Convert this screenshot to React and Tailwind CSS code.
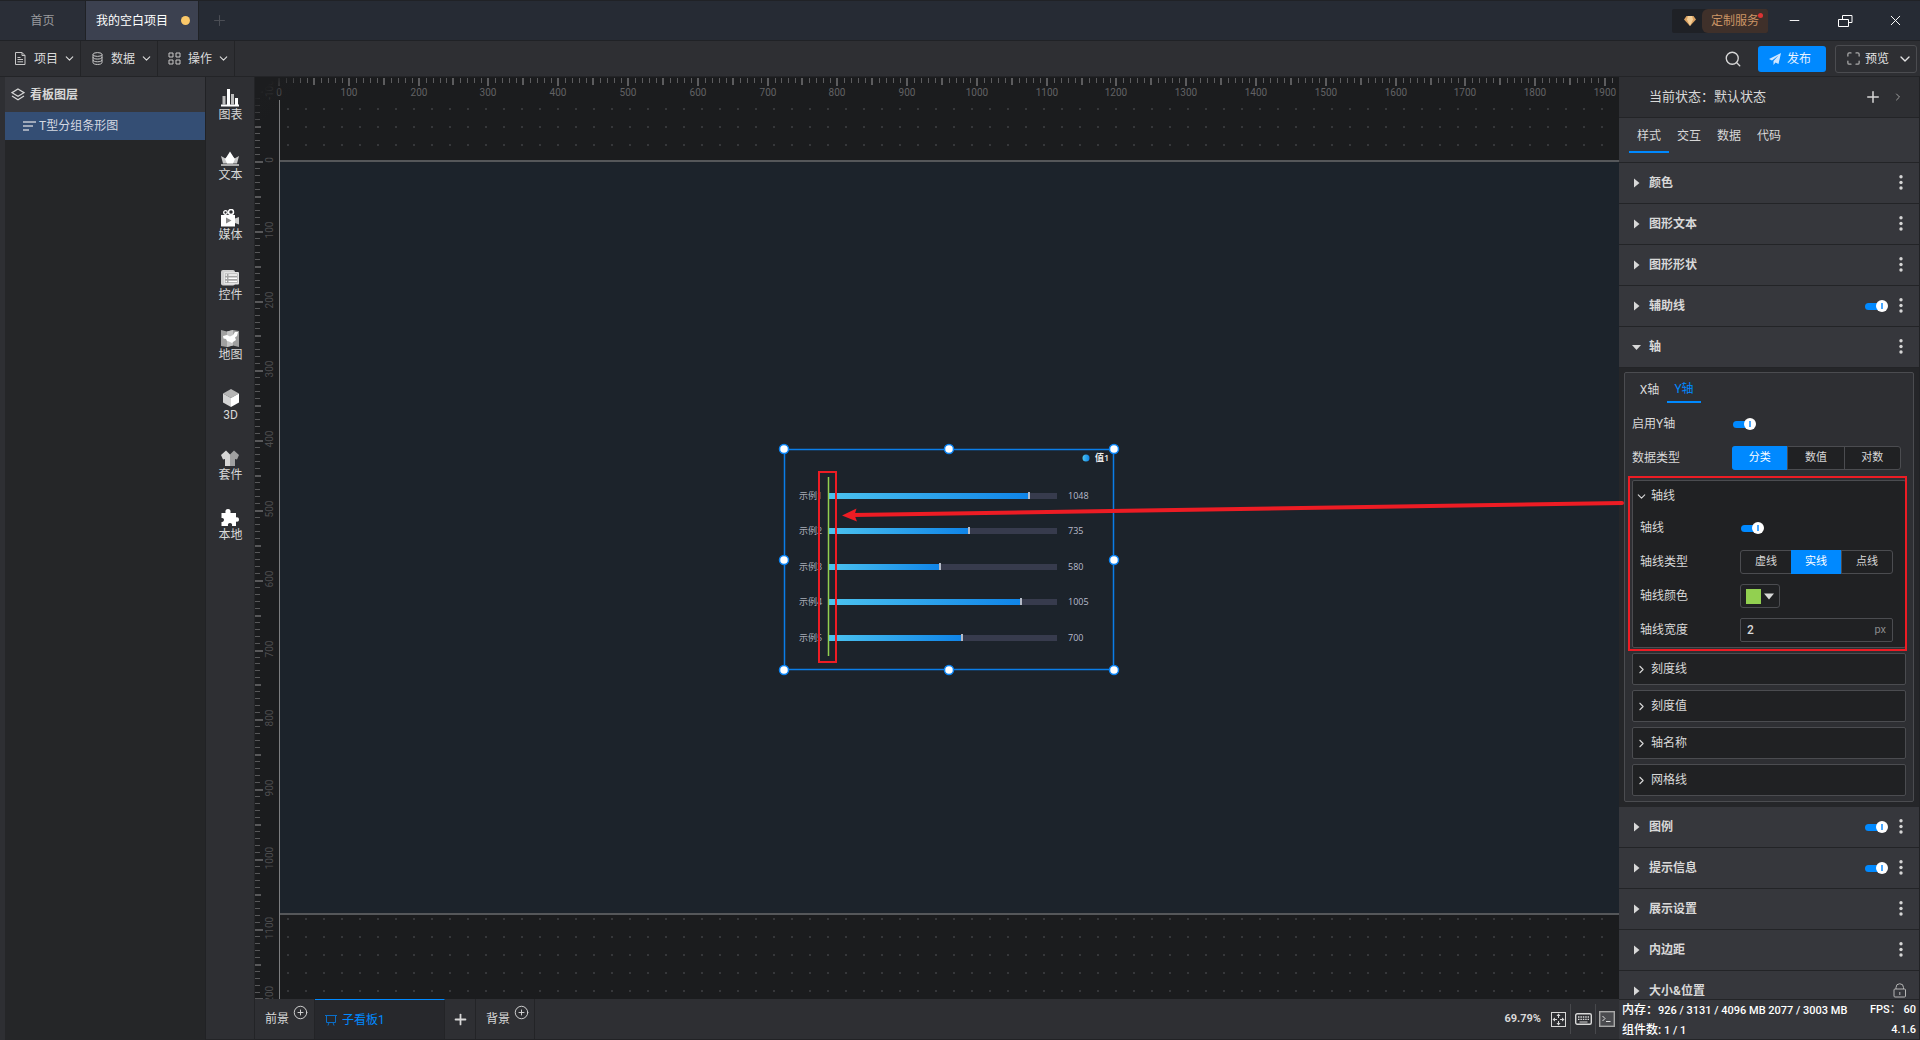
import React from 'react';
import {
  Plus, Minus, X, Search, ChevronDown, ChevronRight, Maximize, CirclePlus,
} from 'lucide-react';

const SCALE = 0.6979;

/* ---------- small controls ---------- */

function Toggle({ label }) {
  return (
    <label className="relative flex h-3 w-[23px] items-center cursor-pointer">
      <input type="checkbox" defaultChecked aria-label={label} className="sr-only" />
      <span className="h-[7px] w-5 rounded-full bg-[#0089ff]" />
      <span className="absolute right-0 flex size-3 items-center justify-center rounded-full bg-white">
        <span className="h-1.5 w-0.5 bg-[#4aa8ff]" />
      </span>
    </label>
  );
}

function Segmented({ name, options, value, className }) {
  return (
    <div role="radiogroup" aria-label={name} className={`flex h-6 rounded-[3px] border border-[#4b4c50] bg-[#202123] ${className}`}>
      {options.map((o, i) => (
        <label
          key={o}
          className={
            'flex flex-1 items-center justify-center text-[11px] ' +
            (o === value ? '-my-px bg-[#0089ff] text-white ' : '') +
            (i > 0 && o !== value ? 'border-l border-[#4b4c50] ' : '') +
            (i === 0 && o === value ? '-ml-px rounded-l-[3px]' : '')
          }
        >
          <input type="radio" name={name} defaultChecked={o === value} className="sr-only" />
          {o}
        </label>
      ))}
    </div>
  );
}

function Dots() {
  return (
    <svg width="4" height="16" viewBox="0 0 4 16" fill="#d6d6d6">
      <circle cx="2" cy="1.700" r="1.700" />
      <circle cx="2" cy="7.500" r="1.700" />
      <circle cx="2" cy="13" r="1.700" />
    </svg>
  );
}

function Section({ title, toggle, open, lock }) {
  return (
    <div className="flex h-[41px] shrink-0 items-center border-b border-[#232427] bg-[#36373c] pl-[15px] pr-4">
      <button type="button" className="flex flex-1 items-center gap-[9px] text-left text-xs font-bold text-[#d8d8d8]">
        <svg width="6" height="10" viewBox="0 0 6 10" fill="#d8d8d8" className="overflow-visible">
          {open ? <path d="M-2 3h9L2.500 8z" /> : <path d="M0 0.500v9L5.500 5z" />}
        </svg>
        {title}
      </button>
      <div className="flex items-center gap-[11px]">
        {toggle && <Toggle label={title} />}
        {lock ? (
          <svg width="14" height="16" viewBox="0 0 14 16" fill="none" stroke="#b5b5b5" className="-mr-1">
            <rect x="1" y="6" width="11.500" height="8" rx="1" />
            <path d="M3 6V4.500a3.700 3.700 0 0 1 7.500 0V6M6.800 9v3" />
          </svg>
        ) : (
          <button type="button" aria-label={`${title}更多`}><Dots /></button>
        )}
      </div>
    </div>
  );
}

function Collapsed({ title }) {
  return (
    <button type="button" className="flex h-8 w-full items-center gap-[3px] rounded-[2px] border border-[#4b4c50] bg-[#202123] pl-[2px] text-left">
      <ChevronRight size={13} strokeWidth={2} />
      {title}
    </button>
  );
}

/* ---------- menu icons ---------- */

function FileIcon() {
  return (
    <svg width="13" height="13" viewBox="0 0 13 13" fill="none" stroke="#c8c8c8">
      <path d="M1.500 0.500h6.500l3 3v9h-9.500zM8 0.500v3h3M3.500 5.500h3M3.500 7.500h5.500M3.500 9.800h5.500" />
    </svg>
  );
}

function DataIcon() {
  return (
    <svg width="13" height="13" viewBox="0 0 13 13" fill="none" stroke="#c8c8c8">
      <ellipse cx="6.500" cy="2.500" rx="4.500" ry="1.900" />
      <path d="M2 2.500v8c0 2.600 9 2.600 9 0v-8M2 5.200c0 2.500 9 2.500 9 0M2 7.900c0 2.500 9 2.500 9 0" />
    </svg>
  );
}

function GridIcon() {
  return (
    <svg width="13" height="13" viewBox="0 0 13 13" fill="none" stroke="#c8c8c8">
      <path d="M1 1h4v4H1zM8 1h4v4H8zM1 8h4v4H1zM8 8h4v4H8z" />
    </svg>
  );
}

/* ---------- component library icons ---------- */

const tools = [
  {
    name: '图表',
    icon: (
      <g>
        <path fill="#bdbdbd" d="M1.500 7h3v8.500h-3zM10 5h3v10.500h-3z" />
        <path fill="#fff" d="M6 0h3v15.500H6zM14 9h3v6.500h-3zM0 15.500h18V17.500H0z" />
      </g>
    ),
  },
  {
    name: '文本',
    icon: (
      <g>
        <path fill="#c9c9c9" d="M0 7l4.500 2.500L9 6l4.500 3.500L18 7l-2 7.500H2z" />
        <path fill="#fff" d="M9 2.500l3.500 5.500 1.500 2-2 4.500H6L4 10l1.500-2z" />
        <path fill="#aaa" d="M0 15h18v2H0z" />
      </g>
    ),
  },
  {
    name: '媒体',
    icon: (
      <g>
        <circle cx="4.500" cy="3.500" r="1.800" fill="none" stroke="#fff" strokeWidth="1.300" />
        <circle cx="10" cy="3" r="2.500" fill="none" stroke="#fff" strokeWidth="1.500" />
        <path fill="#fff" d="M0 6h14v11.500H0z" />
        <path fill="#cfcfcf" d="M14 9.500l4-1.500v7.500l-4-1.500z" />
        <path fill="#8a8a8a" d="M5 8.500v6l5.500-3z" />
      </g>
    ),
  },
  {
    name: '控件',
    icon: (
      <g>
        <rect x="0" y="1" width="14" height="15.500" rx="2" fill="#d0d0d0" />
        <rect x="3" y="3" width="15" height="12.500" rx="1" fill="#e4e4e4" />
        <path fill="#a6a6a6" d="M4 4.500h12.500v9.500H4z" />
        <path stroke="#fff" strokeWidth="1.500" d="M4.500 6h1.500M7.500 6h8.500M4.500 9.200h1.500M7.500 9.200h8.500M4.500 12.400h1.500M7.500 12.400h8.500" />
      </g>
    ),
  },
  {
    name: '地图',
    icon: (
      <g>
        <path fill="#a0a0a0" d="M0 1l6 1.500L12 1l6 1v16l-6-1.500L6 18l-6-1z" />
        <path fill="#c4c4c4" d="M6 2.500L12 1v15.500L6 18z" />
        <path fill="#fff" d="M2 7l4-1 3 1.500 3-1.500 2-3 3 0-1 4-2 1.500 1 2.500-3 2-1 1-3-1.500-2-.500-1-2-2.500-.500z" />
      </g>
    ),
  },
  {
    name: '3D',
    icon: (
      <g>
        <path fill="#b5b5b5" d="M9 0l8 4.500L9 9 1 4.500z" />
        <path fill="#d5d5d5" d="M1 4.500L9 9v9l-8-4.500z" />
        <path fill="#fff" d="M17 4.500L9 9v9l8-4.500z" />
      </g>
    ),
  },
  {
    name: '套件',
    icon: (
      <g>
        <path fill="#d5d5d5" d="M5 1.500L0 6l2 4.500 2-.5v7h5V5.500z" />
        <path fill="#a0a0a0" d="M13 1.500L18 6l-2 4.500-2-.5v7H9V5.500z" />
      </g>
    ),
  },
  {
    name: '本地',
    icon: (
      <path
        fill="#fff"
        d="M0.500 4h4C4 1.500 5 0 7 0s3 1.500 2.500 4H15v4.500c1.500-.500 3 0 3 2s-1.500 2.500-3 2V17h-4c.500-2-.500-3-2-3s-2.500 1-2 3H0.500v-4c1.500 .500 2.500-1 2.500-2.200S2 8.500 0.500 9z"
      />
    ),
  },
];

/* ---------- stage ---------- */

const hTicks = Array.from({ length: 192 }, (_, i) => i * 10);
const vTicks = Array.from({ length: 131 }, (_, i) => i * 10 - 100);

function Rulers() {
  return (
    <svg className="absolute inset-0 size-full" fontFamily="Roboto, sans-serif" fontSize="10">
      <defs>
        <pattern id="grid" x="32" y="31" width="18" height="18" patternUnits="userSpaceOnUse">
          <rect width="2" height="2" fill="#36373a" />
        </pattern>
        <linearGradient id="fade" x1="0" y1="0" x2="1" y2="1">
          <stop offset="0.200" stopColor="#1c1d1f" />
          <stop offset="0.550" stopColor="#1c1d1f" stopOpacity="0" />
        </linearGradient>
      </defs>
      <rect x="25" y="24" width="100%" height="100%" fill="url(#grid)" />
      <rect x="25" y="84" width="100%" height="753" fill="#1c232b" />
      <path d="M25 84h3000M25 837h3000" stroke="#55575a" strokeWidth="2" />
      {hTicks.map((t) => {
        const x = Math.round(24 + t * SCALE);
        return t % 50 === 0 ? (
          <rect key={t} x={x - 1} y="1" width="2" height={t % 100 === 0 ? 8 : 7} fill="#5c5c5e" />
        ) : (
          <rect key={t} x={x} y="1" width="1" height="5" fill="#5c5c5e" />
        );
      })}
      {hTicks.filter((t) => t % 100 === 0).map((t) => (
        <text key={t} x={Math.round(24 + t * SCALE)} y="19" textAnchor="middle" fill="#626264">{t}</text>
      ))}
      {vTicks.map((t) => {
        const y = Math.round(84 + t * SCALE);
        if (t % 50 !== 0) return <rect key={t} x="0" y={y} width="5" height="1" fill="#58585a" />;
        return <rect key={t} x="0" y={y} width={t % 100 === 0 ? 8 : 6} height="2" fill="#58585a" />;
      })}
      {vTicks.filter((t) => t % 100 === 0).map((t) => {
        const y = Math.round(83 + t * SCALE);
        return (
          <text key={t} x="18" y={y} textAnchor="middle" fill="#4e4e50" transform={`rotate(-90 18 ${y})`}>{t}</text>
        );
      })}
      <rect width="50" height="50" fill="url(#fade)" />
      <rect x="24" y="23" width="1" height="100%" fill="#7c7d7f" />
    </svg>
  );
}

const bars = [
  { label: '示例1', value: 1048, y: 47, w: 201 },
  { label: '示例2', value: 735, y: 82, w: 141 },
  { label: '示例3', value: 580, y: 118, w: 112 },
  { label: '示例4', value: 1005, y: 153, w: 193 },
  { label: '示例5', value: 700, y: 189, w: 134 },
];

const handles = [[0, 0], [165, 0], [330, 0], [0, 111], [330, 111], [0, 221], [165, 221], [330, 221]];

function Chart() {
  return (
    <svg
      className="absolute left-[529px] top-[372px] overflow-visible"
      width="330"
      height="221"
      fontFamily="'Open Sans', 'Noto Sans CJK SC', sans-serif"
      fontSize="9"
    >
      <defs>
        <linearGradient id="bar">
          <stop offset="0" stopColor="#4cc3ef" />
          <stop offset="1" stopColor="#0f84e8" />
        </linearGradient>
      </defs>
      <circle cx="302" cy="9" r="3.500" fill="url(#bar)" />
      <text x="311" y="12" fill="#eee" fontWeight="600">值1</text>
      {bars.map((b) => (
        <g key={b.label}>
          <text x="15" y={b.y + 3} fill="#a9adb8">{b.label}</text>
          <rect x="44" y={b.y - 3} width="229" height="6" fill="#373b4d" />
          <rect x="44" y={b.y - 3} width={b.w} height="6" fill="url(#bar)" />
          <rect x={43 + b.w} y={b.y - 4} width="2" height="7" fill="#b4bac6" />
          <text x="284" y={b.y + 3} fill="#b9bccb">{b.value}</text>
        </g>
      ))}
      <path d="M44.500 28v179" stroke="#92d050" strokeWidth="1.500" />
      <rect x="0.500" y="0.500" width="329" height="220" fill="none" stroke="#0a7de8" strokeWidth="1.500" />
      {handles.map(([x, y]) => (
        <circle key={`${x}-${y}`} cx={x} cy={y} r="4.500" fill="#fff" stroke="#0a84f5" strokeWidth="1.500" />
      ))}
      <rect x="35" y="23" width="17" height="190" fill="none" stroke="#ed1c24" strokeWidth="2" />
    </svg>
  );
}

function Arrow() {
  return (
    <svg className="pointer-events-none absolute left-[586px] top-[420px] z-10 overflow-visible" width="784" height="30">
      <path d="M12 18L781 6" stroke="#ed1c24" strokeWidth="4" strokeLinecap="round" />
      <path d="M1 18.500L15.500 11.500l-2 6.500 2.500 6.500z" fill="#ed1c24" />
    </svg>
  );
}

/* ---------- page ---------- */

function TitleBar() {
  return (
    <header className="flex h-[41px] shrink-0 items-stretch border-y border-[#202226] bg-[#262b34]">
      <button type="button" className="w-[86px] border-r border-[#202226] bg-[#2a2e37] text-[#9a9b9e]">首页</button>
      <button type="button" className="flex w-[113px] items-center justify-between border-r border-[#202226] bg-[#3c4150] pl-2.5 pr-2 text-white">
        我的空白项目
        <span className="size-[9px] rounded-full bg-[#fbc869]" />
      </button>
      <button type="button" aria-label="新建" className="px-3 text-[#4b4e55]">
        <Plus size={17} strokeWidth={1.5} />
      </button>
      <div className="ml-auto flex items-center">
        <button type="button" className="relative flex h-6 w-24 items-center overflow-hidden rounded-[2px] bg-[#1f2126]">
          <svg width="12" height="10" viewBox="0 0 12 10" className="ml-3">
            <path d="M2.500 0h7L12 3.500 6 10 0 3.500z" fill="#dba262" />
            <path d="M4 0h4l1 3.500L6 10 3 3.500z" fill="#f4cf98" />
          </svg>
          <span className="ml-1.5 flex h-6 flex-1 items-center rounded-l-md bg-[#3f302a] pl-[9px] text-[#cc9566]">定制服务</span>
          <span className="absolute right-[5px] top-1 size-[5px] rounded-full bg-[#dd3333]" />
        </button>
        <button type="button" aria-label="最小化" className="flex w-[52px] justify-center text-white"><Minus size={15} strokeWidth={1.5} /></button>
        <button type="button" aria-label="还原" className="flex w-[50px] justify-center">
          <svg width="15" height="12" viewBox="0 0 15 12" fill="none" stroke="#fff">
            <path d="M0.500 4.500h10v7h-10zM4.500 4.500v-4h9.500v7h-3.500" />
          </svg>
        </button>
        <button type="button" aria-label="关闭" className="flex w-[50px] justify-center text-white"><X size={17} strokeWidth={1.4} /></button>
      </div>
    </header>
  );
}

function Toolbar() {
  const menus = [['项目', FileIcon], ['数据', DataIcon], ['操作', GridIcon]];
  return (
    <nav className="flex h-9 shrink-0 items-stretch border-b border-[#232427] bg-[#2e2f33]">
      <div className="flex pl-1">
        {menus.map(([name, Icon]) => (
          <button key={name} type="button" className="flex w-[77px] items-center border-r border-[#232427] pl-2.5 text-[#dcdcdc]">
            <Icon />
            <span className="ml-[7px] mr-[5px]">{name}</span>
            <ChevronDown size={13} strokeWidth={2} />
          </button>
        ))}
      </div>
      <div className="ml-auto flex items-center pr-[3px]">
        <button type="button" aria-label="搜索" className="mr-4 text-[#d8d8d8]"><Search size={18} strokeWidth={1.8} /></button>
        <button type="button" className="mr-[9px] flex h-[26px] w-[68px] items-center gap-1.5 rounded-[3px] bg-[#0089ff] pl-[11px] text-[#e8f2ff]">
          <svg width="12" height="12" viewBox="0 0 12 12" fill="#cfe6ff">
            <path d="M12 0L0 6l3 1.500L9.500 2.500 4.500 8v4l2-2.500L9.500 11z" />
          </svg>
          发布
        </button>
        <button type="button" className="flex h-7 w-[82px] items-center rounded-[3px] border border-[#4b4c50] pl-2.5 text-[#e4e4e4]">
          <Maximize size={15} strokeWidth={2} className="text-[#aaa]" />
          <span className="ml-1 mr-2">预览</span>
          <ChevronDown size={16} strokeWidth={2} />
        </button>
      </div>
    </nav>
  );
}

function LayerPanel() {
  return (
    <aside className="w-[206px] shrink-0 border-r border-[#212225] bg-[#2e2f33] pl-[5px]">
      <div className="flex h-full flex-col bg-[#252628]">
        <div className="flex h-[35px] items-center gap-[5px] bg-[#36373c] pl-[6px] font-bold text-[#d8d8d8]">
          <svg width="14" height="13" viewBox="0 0 14 13" fill="none" stroke="#d8d8d8" strokeWidth="1.200">
            <path d="M7 1l6 3.700-6 3.600L1 4.700zM1 8l6 3.700L13 8" />
          </svg>
          看板图层
        </div>
        <button type="button" className="flex h-7 items-center gap-[3px] bg-[#344e74] pl-[18px] text-[#d4d9e2]">
          <svg width="13" height="10" viewBox="0 0 13 10" fill="#9fa9ba">
            <path d="M0 0h13v2H0zM0 4h10v2H0zM0 8h6v2H0z" />
          </svg>
          T型分组条形图
        </button>
      </div>
    </aside>
  );
}

function AxisPanel() {
  return (
    <div className="shrink-0 bg-[#252629] px-[5px] pb-[5px] pt-1">
      <div className="rounded-[2px] border border-[#4b4c50] bg-[#2e2f33] px-[7px] pb-[5px]">
        <div className="flex h-[34px] items-start pt-[3px]">
          <button type="button" className="h-7 w-[35px]">X轴</button>
          <button type="button" className="h-[27px] w-[34px] border-b-2 border-[#0089ff] text-[#0089ff]">Y轴</button>
        </div>
        <div className="flex h-[34px] items-center"><span className="w-[101px]">启用Y轴</span><Toggle label="启用Y轴" /></div>
        <div className="flex h-[34px] items-center">
          <span className="w-[100px]">数据类型</span>
          <Segmented name="数据类型" options={['分类', '数值', '对数']} value="分类" className="w-[169px]" />
        </div>

        <div className="mt-[5px] flex flex-col gap-[5px]">
          <div className="relative rounded-[2px] border border-[#4b4c50] bg-[#202123]">
            <button type="button" className="flex h-[30px] items-center gap-[3px] pl-[2px]">
              <ChevronDown size={13} strokeWidth={2} />
              轴线
            </button>
            <div className="pl-[7px] pr-3">
              <div className="flex h-[34px] items-center"><span className="w-[101px]">轴线</span><Toggle label="轴线" /></div>
              <div className="flex h-[34px] items-center">
                <span className="w-[100px]">轴线类型</span>
                <Segmented name="轴线类型" options={['虚线', '实线', '点线']} value="实线" className="flex-1" />
              </div>
              <div className="flex h-[34px] items-center">
                <span className="w-[100px]">轴线颜色</span>
                <button type="button" aria-label="轴线颜色" className="flex h-6 w-10 items-center gap-[3px] rounded-[3px] border border-[#4b4c50] pl-[5px]">
                  <span className="size-[15px] bg-[#92d050]" />
                  <svg width="10" height="7" viewBox="0 0 10 7" fill="#d8d8d8"><path d="M0 0.500h10L5 6.500z" /></svg>
                </button>
              </div>
              <div className="flex h-[34px] items-center">
                <label htmlFor="axis-width" className="w-[100px]">轴线宽度</label>
                <span className="flex h-6 flex-1 items-center rounded-[2px] border border-[#4b4c50] px-1.5">
                  <input id="axis-width" defaultValue="2" className="w-0 flex-1 bg-transparent font-medium outline-none" />
                  <span className="text-[11px] text-[#8b8b8d]">px</span>
                </span>
              </div>
            </div>
            <div className="pointer-events-none absolute -bottom-1 -left-[5px] -right-0.5 -top-[5px] border-2 border-[#ed1c24]" />
          </div>
          <Collapsed title="刻度线" />
          <Collapsed title="刻度值" />
          <Collapsed title="轴名称" />
          <Collapsed title="网格线" />
        </div>
      </div>
    </div>
  );
}

function Inspector() {
  return (
    <aside className="flex w-[301px] shrink-0 flex-col border-r border-[#212225] bg-[#36373c] text-[#d8d8d8]">
      <div className="flex h-[41px] shrink-0 items-center border-b border-[#232427] bg-[#2e2f33] pl-[30px] pr-[15px] text-[13px]">
        <span className="flex-1">当前状态：默认状态</span>
        <button type="button" aria-label="添加状态" className="mr-2.5"><Plus size={18} strokeWidth={2} /></button>
        <ChevronRight size={12} strokeWidth={2} className="text-[#a0a0a0]" />
      </div>
      <div className="flex h-[45px] shrink-0 border-b border-[#232427] pl-2.5">
        {['样式', '交互', '数据', '代码'].map((t, i) => (
          <button key={t} type="button" className={'h-[35px] w-10 border-b-2 pt-0.5 ' + (i === 0 ? 'border-[#0089ff]' : 'border-transparent')}>{t}</button>
        ))}
      </div>
      <div className="flex min-h-0 flex-1 flex-col overflow-hidden">
        <Section title="颜色" />
        <Section title="图形文本" />
        <Section title="图形形状" />
        <Section title="辅助线" toggle />
        <Section title="轴" open />
        <AxisPanel />
        <Section title="图例" toggle />
        <Section title="提示信息" toggle />
        <Section title="展示设置" />
        <Section title="内边距" />
        <Section title="大小&位置" lock />
      </div>
      <footer className="h-[41px] shrink-0 border-y border-[#232427] px-[3px] text-[11px] font-medium leading-5 text-white">
        <div className="flex h-5 items-center leading-4">
          <span className="whitespace-pre"><span className="text-xs">内存：</span>926 / 3131 / 4096 MB 2077 / 3003 MB</span>
          <span className="ml-auto">FPS： 60</span>
        </div>
        <div className="flex h-5 items-center leading-4">
          <span><span className="text-xs">组件数:</span> 1 / 1</span>
          <span className="ml-auto">4.1.6</span>
        </div>
      </footer>
    </aside>
  );
}

function BoardTabs() {
  return (
    <div className="flex h-[41px] shrink-0 items-stretch border-b border-[#212225] bg-[#2e2f33] text-[#d8d8d8]">
      <button type="button" className="flex w-[60px] items-center border-r border-[#232427] pl-2.5">
        前景<CirclePlus size={15} strokeWidth={1.5} className="mb-3.5 ml-1" />
      </button>
      <button type="button" className="flex w-[130px] items-center gap-[5px] border-r border-t border-[#232427] border-t-[#0089ff] bg-[#27282c] pl-2.5 text-[#0089ff]">
        <svg width="12" height="12" viewBox="0 0 12 12" fill="none" stroke="#0a6fc9">
          <path d="M0 1.500h12M1.500 1.500v7h9v-7M4 8.500L3 11.500M8 8.500l1 3" />
        </svg>
        子看板1
      </button>
      <button type="button" aria-label="添加看板" className="flex w-[31px] items-center justify-center border-r border-[#232427]">
        <Plus size={17} strokeWidth={2.5} />
      </button>
      <button type="button" className="flex w-[59px] items-center border-r border-[#232427] pl-2.5">
        背景<CirclePlus size={15} strokeWidth={1.5} className="mb-3.5 ml-1" />
      </button>
      <div className="ml-auto flex items-center pr-1">
        <span className="mr-2.5 text-[11px] font-bold">69.79%</span>
        <button type="button" aria-label="适应画布">
          <svg width="15" height="15" viewBox="0 0 15 15" fill="none" stroke="#d8d8d8">
            <rect x="0.500" y="0.500" width="14" height="14" />
            <path fill="#d8d8d8" stroke="none" d="M7.500 1.500l2 2.500h-4zM7.500 13.500l2-2.500h-4zM1.500 7.500l2.500-2v4zM13.500 7.500l-2.500-2v4zM7 4h1v2H7zM7 9h1v2H7zM4 7h2v1H4zM9 7h2v1H9z" />
          </svg>
        </button>
        <span className="mx-1 h-[30px] w-px bg-[#47484c]" />
        <button type="button" aria-label="快捷键">
          <svg width="17" height="12" viewBox="0 0 17 12" fill="none" stroke="#d8d8d8">
            <rect x="0.700" y="0.700" width="15.600" height="10.600" rx="1.500" strokeWidth="1.400" />
            <path d="M3 4h11M3 6.300h11" strokeDasharray="1.500 0.900" strokeWidth="1.300" />
            <path d="M4.500 9h8" />
          </svg>
        </button>
        <span className="mx-[3px] h-[30px] w-px bg-[#47484c]" />
        <button type="button" aria-label="控制台">
          <svg width="16" height="16" viewBox="0 0 16 16" fill="none" stroke="#a8a8a8">
            <rect x="0.700" y="0.700" width="14.600" height="14.600" fill="#4a4b4f" strokeWidth="1.400" />
            <path d="M3.500 5l2.500 2.500L3.500 10M7 10.500h4.500" stroke="#e0e0e0" />
          </svg>
        </button>
      </div>
    </div>
  );
}

export default function App() {
  return (
    <div className="flex h-screen flex-col overflow-hidden bg-[#2e2f33] font-['Roboto','Noto_Sans_CJK_SC',sans-serif] text-xs">
      <TitleBar />
      <Toolbar />
      <div className="flex min-h-0 flex-1">
        <LayerPanel />
        <div className="flex w-[49px] shrink-0 flex-col items-center gap-[26px] border-b border-r border-[#232427] bg-[#2e2f33] pl-px pt-3 text-[#d8d8d8]">
          {tools.map((t) => (
            <button key={t.name} type="button" className="flex flex-col items-center">
              <svg width="18" height="18" viewBox="0 0 18 18">{t.icon}</svg>
              <span className="h-4">{t.name}</span>
            </button>
          ))}
        </div>
        <main className="flex min-w-0 flex-1 flex-col">
          <div className="relative min-h-0 flex-1 bg-[#1b1c1e]">
            <Rulers />
            <Chart />
            <Arrow />
          </div>
          <BoardTabs />
        </main>
        <Inspector />
      </div>
    </div>
  );
}
